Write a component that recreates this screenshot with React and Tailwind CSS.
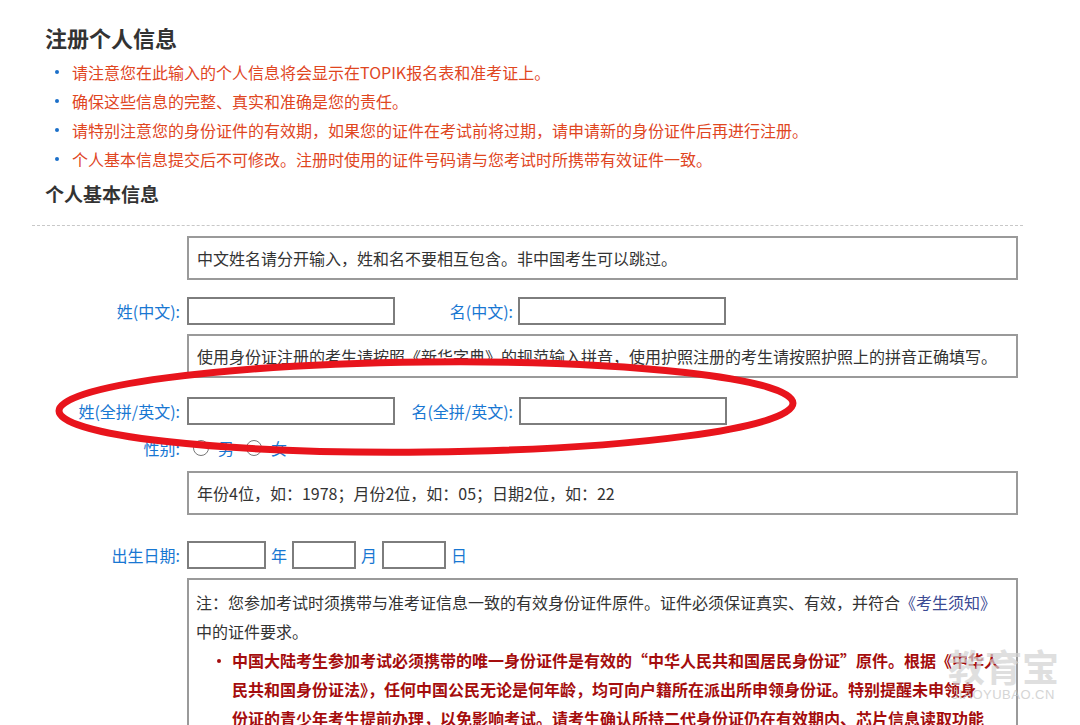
import React from "react";

const font = { fontFamily: '"Noto Sans CJK SC", "Noto Sans", sans-serif' };

function Input({ w = "w-[208px]" }) {
  return <div className={`${w} h-[28px] border-2 border-[#7d7d7d] bg-white shrink-0`} />;
}

function Hint({ children }) {
  return (
    <div className="ml-[155px] w-[831px] h-[44px] border-2 border-[#9a9a9a] flex items-center pl-[8px] text-[16px] text-[#333] leading-[20px] whitespace-nowrap">
      {children}
    </div>
  );
}

function Label({ children, className = "" }) {
  return (
    <div className={`text-[16px] leading-[20px] text-[#1877d2] text-right whitespace-nowrap ${className}`}>
      {children}
    </div>
  );
}

function Radio() {
  return <div className="w-[16px] h-[16px] rounded-full border-[1.5px] border-[#777] bg-white shrink-0" />;
}

export default function App() {
  const tips = [
    "请注意您在此输入的个人信息将会显示在TOPIK报名表和准考证上。",
    "确保这些信息的完整、真实和准确是您的责任。",
    "请特别注意您的身份证件的有效期，如果您的证件在考试前将过期，请申请新的身份证件后再进行注册。",
    "个人基本信息提交后不可修改。注册时使用的证件号码请与您考试时所携带有效证件一致。",
  ];
  return (
    <div className="relative w-[1080px] h-[725px] overflow-hidden bg-white" style={font}>
      <div className="pl-[32px] w-[1023px]">
        <h1 className="pt-[22px] pl-[13px] text-[22px] leading-[30px] font-bold text-[#333]">注册个人信息</h1>
        <ul className="mt-[5px]">
          {tips.map((t) => (
            <li key={t} className="flex items-center h-[29px] text-[16px] text-[#e0461f] whitespace-nowrap">
              <span className="ml-[23px] w-[4px] h-[4px] rounded-full bg-[#1b6fc9] shrink-0" />
              <span className="ml-[13px]">{t}</span>
            </li>
          ))}
        </ul>
        <h2 className="mt-[7px] pl-[13px] text-[19px] leading-[28px] font-bold text-[#333]">个人基本信息</h2>
        <div className="mt-[17px] border-t border-dashed border-[#c8c8c8]" />

        <div className="mt-[10px]">
          <Hint>中文姓名请分开输入，姓和名不要相互包含。非中国考生可以跳过。</Hint>

          <div className="mt-[17px] flex items-center">
            <Label className="w-[148px]">姓(中文):</Label>
            <div className="ml-[7px]"><Input /></div>
            <Label className="w-[118px]">名(中文):</Label>
            <div className="ml-[5px]"><Input /></div>
          </div>

          <div className="mt-[9px]">
            <Hint>使用身份证注册的考生请按照《新华字典》的规范输入拼音，使用护照注册的考生请按照护照上的拼音正确填写。</Hint>
          </div>

          <div className="mt-[19px] flex items-center">
            <Label className="w-[148px]">姓(全拼/英文):</Label>
            <div className="ml-[7px]"><Input /></div>
            <Label className="w-[118px]">名(全拼/英文):</Label>
            <div className="ml-[6px]"><Input /></div>
          </div>

          <div className="mt-[12px] h-[22px] flex items-center">
            <Label className="w-[148px]">性别:</Label>
            <div className="ml-[13px] flex items-center">
              <Radio />
              <span className="ml-[9px] text-[16px] text-[#1877d2]">男</span>
              <span className="ml-[12px]"><Radio /></span>
              <span className="ml-[9px] text-[16px] text-[#1877d2]">女</span>
            </div>
          </div>

          <div className="mt-[12px]">
            <Hint>年份4位，如：1978；月份2位，如：05；日期2位，如：22</Hint>
          </div>

          <div className="mt-[26px] flex items-center">
            <Label className="w-[148px]">出生日期:</Label>
            <div className="ml-[7px] flex items-center gap-[5px] text-[16px] text-[#1877d2]">
              <Input w="w-[79px]" />
              <span>年</span>
              <Input w="w-[64px]" />
              <span>月</span>
              <Input w="w-[64px]" />
              <span>日</span>
            </div>
          </div>

          <div className="mt-[9px] ml-[155px] w-[831px] h-[200px] border-2 border-[#9a9a9a] pt-[8px] pl-[7px] text-[16px] leading-[29px]">
            <p className="text-[#333] whitespace-nowrap">
              注：您参加考试时须携带与准考证信息一致的有效身份证件原件。证件必须保证真实、有效，并符合
              <span className="text-[#3b4a93]">《考生须知》</span>
              <br />
              中的证件要求。
            </p>
            <ul>
              <li className="flex text-[#a50d0d] font-bold whitespace-nowrap">
                <span className="ml-[21px] mt-[13px] w-[4px] h-[4px] bg-[#a50d0d] rounded-full shrink-0" />
                <span className="ml-[11px]">
                  中国大陆考生参加考试必须携带的唯一身份证件是有效的“中华人民共和国居民身份证”原件。根据《中华人
                  <br />
                  民共和国身份证法》，任何中国公民无论是何年龄，均可向户籍所在派出所申领身份证。特别提醒未申领身
                  <br />
                  份证的青少年考生提前办理，以免影响考试。请考生确认所持二代身份证仍在有效期内、芯片信息读取功能
                </span>
              </li>
            </ul>
          </div>
        </div>
      </div>

      <svg className="absolute left-0 top-0 pointer-events-none" width="1080" height="725">
        <ellipse cx="426" cy="407" rx="367" ry="45" fill="none" stroke="#e8141c" strokeWidth="7" transform="rotate(-0.6 426 407)" />
      </svg>

      <div className="absolute left-[948px] top-[644px] flex flex-col items-center whitespace-nowrap pointer-events-none opacity-70">
        <span className="text-[37px] leading-[44px] text-[#d2d2d2] font-bold">教育宝</span>
        <span className="text-[13px] leading-[14px] text-[#c4c4c4] tracking-[0.5px]" style={{ fontFamily: '"Liberation Sans", sans-serif' }}>JIAOYUBAO.CN</span>
      </div>
    </div>
  );
}
